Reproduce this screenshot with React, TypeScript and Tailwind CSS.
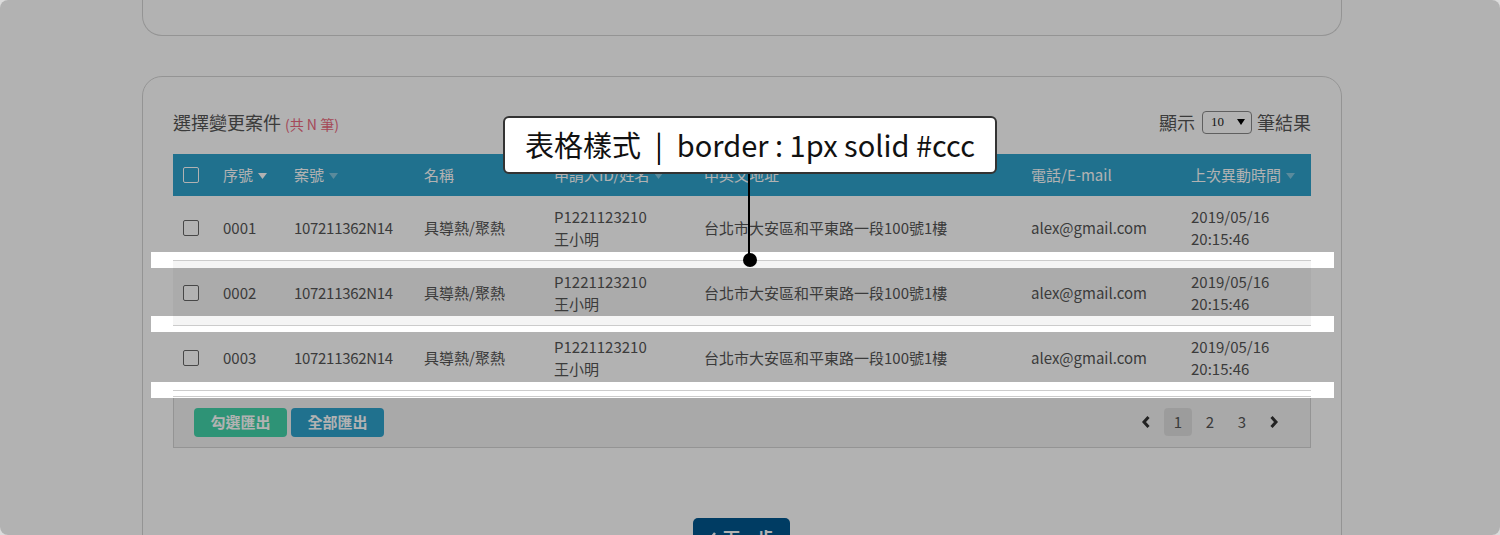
import React from 'react';

const gridCols = 'grid grid-cols-[40px_71px_130px_130px_150px_327px_160px_130px]';

const rows = ['0001', '0002', '0003'];

function SortArrow({ active }: { active?: boolean }) {
  return (
    <svg width="9" height="6" viewBox="0 0 9 6" className="ml-[5px] mt-[2px]">
      <path d="M0 0h9L4.5 6z" className={active ? 'fill-white' : 'fill-white/40'} />
    </svg>
  );
}

function Box({ light }: { light?: boolean }) {
  return (
    <div
      className={`w-4 h-4 rounded-[2px] border ${light ? 'border-white' : 'border-[#666] bg-white'}`}
    />
  );
}

function Chevron({ dir }: { dir: 'left' | 'right' }) {
  return (
    <svg width="10" height="14" viewBox="0 0 10 14">
      <path
        d={dir === 'left' ? 'M7.5 2L3 7l4.5 5' : 'M2.5 2L7 7l-4.5 5'}
        fill="none"
        stroke="#333"
        strokeWidth="3"
      />
    </svg>
  );
}

export default function App() {
  return (
    <div className="w-[1500px] h-[535px] bg-[#dcdcdc] font-['Noto_Sans_CJK_TC','Noto_Sans',sans-serif]">
      <div className="relative w-full h-full rounded-[8px] overflow-hidden bg-white">
        {/* page */}
        <div className="ml-[142px] w-[1200px]">
          <div className="h-[36px] border border-t-0 border-[#d5d5d5] rounded-b-[20px]" />

          <div className="mt-[40px] border border-[#d5d5d5] rounded-[20px] px-[30px] pt-[33px] pb-[40px]">
            <div className="flex items-center justify-between h-[24px]">
              <div className="flex items-baseline text-[#555]">
                <span className="text-[18px]">選擇變更案件</span>
                <span className="ml-[4px] text-[14px] text-[#ec6a80]">(共 N 筆)</span>
              </div>
              <div className="flex items-center text-[18px] text-[#555]">
                <span>顯示</span>
                <div className="ml-[7px] mr-[5px] w-[50px] h-[23px] border border-[#888] rounded-[4px] flex items-center justify-between pl-[8px] pr-[6px] text-[13px] text-[#222] font-['Liberation_Serif',serif]">
                  <span>10</span>
                  <svg width="8" height="6" viewBox="0 0 8 6">
                    <path d="M0 0h8L4 6z" className="fill-black" />
                  </svg>
                </div>
                <span>筆結果</span>
              </div>
            </div>

            {/* table */}
            <div className="mt-[20px] w-[1138px]">
              <div className={`${gridCols} h-[42px] bg-[#2ea2cc] text-white text-[15px] items-center`}>
                <div className="px-[10px]"><Box light /></div>
                <div className="px-[10px] flex items-center">序號<SortArrow active /></div>
                <div className="px-[10px] flex items-center">案號<SortArrow /></div>
                <div className="px-[10px]">名稱</div>
                <div className="px-[10px] flex items-center">申請人ID/姓名<SortArrow /></div>
                <div className="px-[10px]">中英文地址</div>
                <div className="px-[10px]">電話/E-mail</div>
                <div className="px-[10px] flex items-center">上次異動時間<SortArrow /></div>
              </div>

              {rows.map((no, i) => (
                <div
                  key={no}
                  className={`${gridCols} h-[65px] border-b border-[#ccc] items-center text-[15px] text-[#555] ${i % 2 === 1 ? 'bg-[#f5f5f5]' : 'bg-white'}`}
                >
                  <div className="px-[10px]"><Box /></div>
                  <div className="px-[10px]">{no}</div>
                  <div className="px-[10px] tracking-[-0.3px]">107211362N14</div>
                  <div className="px-[10px]">具導熱/聚熱</div>
                  <div className="px-[10px] leading-[22px]">
                    <div>P1221123210</div>
                    <div>王小明</div>
                  </div>
                  <div className="px-[10px]">台北市大安區和平東路一段100號1樓</div>
                  <div className="px-[10px]">alex@gmail.com</div>
                  <div className="px-[10px] leading-[22px]">
                    <div>2019/05/16</div>
                    <div>20:15:46</div>
                  </div>
                </div>
              ))}

              <div className="mt-[5px] h-[52px] border border-[#d5d5d5] bg-[#f3f3f3] flex items-center justify-between pl-[20px] pr-[22px]">
                <div className="flex gap-[4px]">
                  <button className="w-[93px] h-[29px] rounded-[4px] bg-[#42d3aa] text-white text-[15px] font-bold">勾選匯出</button>
                  <button className="w-[93px] h-[29px] rounded-[4px] bg-[#2ea2cc] text-white text-[15px] font-bold">全部匯出</button>
                </div>
                <div className="flex gap-[4px] items-center text-[15px] text-[#555]">
                  <div className="w-[28px] h-[28px] flex items-center justify-center"><Chevron dir="left" /></div>
                  <div className="w-[28px] h-[28px] flex items-center justify-center rounded-[4px] bg-[#e0e0e0]">1</div>
                  <div className="w-[28px] h-[28px] flex items-center justify-center">2</div>
                  <div className="w-[28px] h-[28px] flex items-center justify-center">3</div>
                  <div className="w-[28px] h-[28px] flex items-center justify-center"><Chevron dir="right" /></div>
                </div>
              </div>
            </div>

            <button className="mt-[70px] ml-[520px] flex items-center justify-center gap-[6px] w-[97px] h-[40px] rounded-[5px] bg-[#00578f] text-white text-[17px] font-bold">
              <svg width="8" height="12" viewBox="0 0 8 12">
                <path d="M6 1L2 6l4 5" fill="none" stroke="white" strokeWidth="2.5" />
              </svg>
              下一步
            </button>
          </div>
        </div>

        {/* annotation overlay */}
        <div className="absolute inset-0 bg-black/30" />

        <div className="absolute left-[151px] top-[252px] w-[1183px] h-[16px] bg-white">
          <div className="ml-[22px] w-[1138px] flex flex-col">
            <div className="h-[8px]" />
            <div className="h-[1px] bg-[#ccc]" />
            <div className="h-[7px] bg-[#f5f5f5]" />
          </div>
        </div>
        <div className="absolute left-[151px] top-[316px] w-[1183px] h-[16px] bg-white">
          <div className="ml-[22px] w-[1138px] flex flex-col">
            <div className="h-[9px] bg-[#f5f5f5]" />
            <div className="h-[1px] bg-[#ccc]" />
            <div className="h-[6px]" />
          </div>
        </div>
        <div className="absolute left-[151px] top-[382px] w-[1183px] h-[16px] bg-white">
          <div className="ml-[22px] w-[1138px] flex flex-col">
            <div className="h-[8px]" />
            <div className="h-[1px] bg-[#ccc]" />
            <div className="h-[5px]" />
            <div className="h-[1px] bg-[#ccc]" />
          </div>
        </div>

        <div className="absolute left-[748px] top-[174px] w-[2px] h-[86px] bg-black" />
        <div className="absolute left-[743px] top-[253px] w-[14px] h-[14px] rounded-full bg-black" />
        <div className="absolute left-[503px] top-[116px] w-[494px] h-[58px] bg-white border-2 border-[#333] rounded-[6px] flex items-center justify-center text-[29px] text-[#111] whitespace-nowrap">
          表格樣式<span className="mx-[14px] text-[#000]">|</span>border : 1px solid #ccc
        </div>
      </div>
    </div>
  );
}
